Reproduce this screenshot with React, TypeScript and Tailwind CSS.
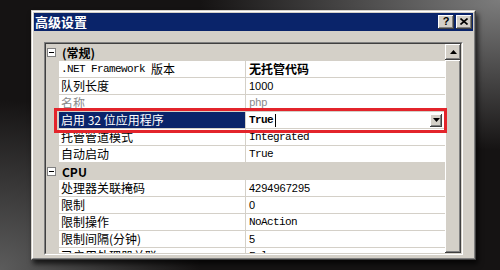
import React from "react";

type Row =
  | { kind: "cat"; label: string }
  | {
      kind: "prop";
      name: React.ReactNode;
      value: React.ReactNode;
      disabled?: boolean;
      selected?: boolean;
    };

const cjk = "[font-family:'Noto_Sans_CJK_SC',sans-serif]";

function Mono({ children, bold }: { children: React.ReactNode; bold?: boolean }) {
  return (
    <span
      className={
        bold
          ? "[font-family:'Liberation_Mono',monospace] text-[11px] tracking-[-0.6px] font-bold"
          : "[font-family:'Liberation_Mono',monospace] text-[11px] tracking-[-0.6px]"
      }
    >
      {children}
    </span>
  );
}

function Num({ children }: { children: React.ReactNode }) {
  return <span className="[font-family:'Liberation_Sans',sans-serif] text-[11px]">{children}</span>;
}

function Tri({ down }: { down?: boolean }) {
  return (
    <svg width="7" height="4" viewBox="0 0 7 4" className="block">
      {down ? <path d="M0 0h7L3.5 4z" fill="#000" /> : <path d="M0 4h7L3.5 0z" fill="#000" />}
    </svg>
  );
}

const rows: Row[] = [
  { kind: "cat", label: "(常规)" },
  {
    kind: "prop",
    name: (
      <>
        <Mono>.NET Framework </Mono>
        <span>版本</span>
      </>
    ),
    value: <span className="font-bold">无托管代码</span>,
  },
  { kind: "prop", name: "队列长度", value: <Num>1000</Num> },
  { kind: "prop", name: "名称", value: <Mono>php</Mono>, disabled: true },
  { kind: "prop", name: "启用 32 位应用程序", value: <Mono bold>True</Mono>, selected: true },
  { kind: "prop", name: "托管管道模式", value: <Mono>Integrated</Mono> },
  { kind: "prop", name: "自动启动", value: <Mono>True</Mono> },
  { kind: "cat", label: "CPU" },
  { kind: "prop", name: "处理器关联掩码", value: <Num>4294967295</Num> },
  { kind: "prop", name: "限制", value: <Num>0</Num> },
  { kind: "prop", name: "限制操作", value: <Mono>NoAction</Mono> },
  { kind: "prop", name: "限制间隔(分钟)", value: <Num>5</Num> },
  { kind: "prop", name: "已启用处理器关联", value: <Mono>False</Mono> },
];

export default function App() {
  return (
    <div
      className={`relative w-[500px] h-[270px] overflow-hidden pt-[10px] pl-[31px] bg-[#151313] bg-[radial-gradient(ellipse_300px_150px_at_100%_0%,#7c7c7c,rgba(0,0,0,0)),radial-gradient(ellipse_200px_170px_at_0%_100%,#5c5c5c,rgba(0,0,0,0))] ${cjk} text-[12px] text-black`}
    >
      {/* Window */}
      <div className="w-[445px] h-[250px] bg-[#d4d0c8] border border-t-[#d4d0c8] border-l-[#d4d0c8] border-r-[#404040] border-b-[#404040] shadow-[2px_4px_5px_rgba(0,0,0,0.7)]">
        <div className="h-full border border-t-white border-l-white border-r-[#808080] border-b-[#808080] p-px flex flex-col">
          {/* Title bar */}
          <div className="h-[18px] bg-[#0a246a] flex items-center pl-[1px] pr-[1px]">
            <span className="text-white font-bold text-[13px] leading-[18px]">高级设置</span>
            <div className="ml-auto flex items-center gap-[2px]">
              <div className="w-[16px] h-[14px] bg-[#d4d0c8] shadow-[inset_-1px_-1px_0_#404040,inset_1px_1px_0_#ffffff,inset_-2px_-2px_0_#808080] flex items-center justify-center">
                <span className="[font-family:'Liberation_Sans',sans-serif] font-bold text-[11px] leading-none -mt-px">?</span>
              </div>
              <div className="w-[16px] h-[14px] bg-[#d4d0c8] shadow-[inset_-1px_-1px_0_#404040,inset_1px_1px_0_#ffffff,inset_-2px_-2px_0_#808080] flex items-center justify-center">
                <svg width="8" height="7" viewBox="0 0 8 7" className="block -mt-px">
                  <path d="M0.5 0.5l7 6M7.5 0.5l-7 6" stroke="#000" strokeWidth="1.6" />
                </svg>
              </div>
            </div>
          </div>

          {/* Content */}
          <div className="pl-[10px] pt-[11px]">
            {/* Property grid (sunken) */}
            <div className="w-[419px] h-[213px] border border-t-[#808080] border-l-[#808080] border-r-white border-b-white">
              <div className="h-full border border-t-[#404040] border-l-[#404040] border-r-[#d4d0c8] border-b-[#d4d0c8] flex">
                <div className="flex-1 bg-[#d4d0c8] overflow-hidden">
                  {rows.map((r, i) =>
                    r.kind === "cat" ? (
                      <div key={i} className="h-[17px] flex items-center">
                        <div className="ml-[1px] w-[9px] h-[9px] border border-[#808080] bg-white flex items-center justify-center">
                          <div className="w-[5px] h-px bg-black" />
                        </div>
                        <span className="ml-[6px] font-bold leading-[16px]">{r.label}</span>
                      </div>
                    ) : (
                      <div key={i} className="h-[17px] flex">
                        <div className="w-[13px] shrink-0" />
                        <div
                          className={
                            r.selected
                              ? "w-[187px] shrink-0 border-r border-b border-[#d4d0c8] bg-[#0a246a] text-white pl-[2px] flex items-center leading-[16px] whitespace-pre"
                              : r.disabled
                              ? "w-[187px] shrink-0 border-r border-b border-[#d4d0c8] bg-white text-[#8a8a8a] pl-[2px] flex items-center leading-[16px] whitespace-pre"
                              : "w-[187px] shrink-0 border-r border-b border-[#d4d0c8] bg-white pl-[2px] flex items-center leading-[16px] whitespace-pre"
                          }
                        >
                          {r.name}
                        </div>
                        <div
                          className={
                            r.disabled
                              ? "flex-1 border-b border-[#d4d0c8] bg-white text-[#8a8a8a] pl-[3px] flex items-center leading-[16px]"
                              : "flex-1 border-b border-[#d4d0c8] bg-white pl-[3px] flex items-center leading-[16px]"
                          }
                        >
                          {r.value}
                          {r.selected && (
                            <>
                              <div className="ml-[2px] w-px h-[13px] bg-black" />
                              <div className="ml-auto mr-[3px] w-[12px] h-[13px] bg-[#d4d0c8] shadow-[inset_-1px_-1px_0_#404040,inset_1px_1px_0_#ffffff,inset_-2px_-2px_0_#808080] flex items-center justify-center">
                                <Tri down />
                              </div>
                            </>
                          )}
                        </div>
                      </div>
                    )
                  )}
                </div>
                {/* Scrollbar */}
                <div className="w-[16px] flex flex-col bg-[#e6e4df]">
                  <div className="h-[16px] bg-[#d4d0c8] shadow-[inset_-1px_-1px_0_#404040,inset_1px_1px_0_#ffffff,inset_-2px_-2px_0_#808080] flex items-center justify-center">
                    <div className="-mt-px">
                      <Tri />
                    </div>
                  </div>
                  <div className="flex-1 bg-[#d4d0c8] shadow-[inset_-1px_-1px_0_#404040,inset_1px_1px_0_#ffffff,inset_-2px_-2px_0_#808080]" />
                </div>
              </div>
            </div>
          </div>
        </div>
      </div>

      {/* Red highlight box */}
      <div className="absolute left-[54px] top-[108px] w-[393px] h-[25px] border-[3px] border-[#e3242b]" />
    </div>
  );
}
